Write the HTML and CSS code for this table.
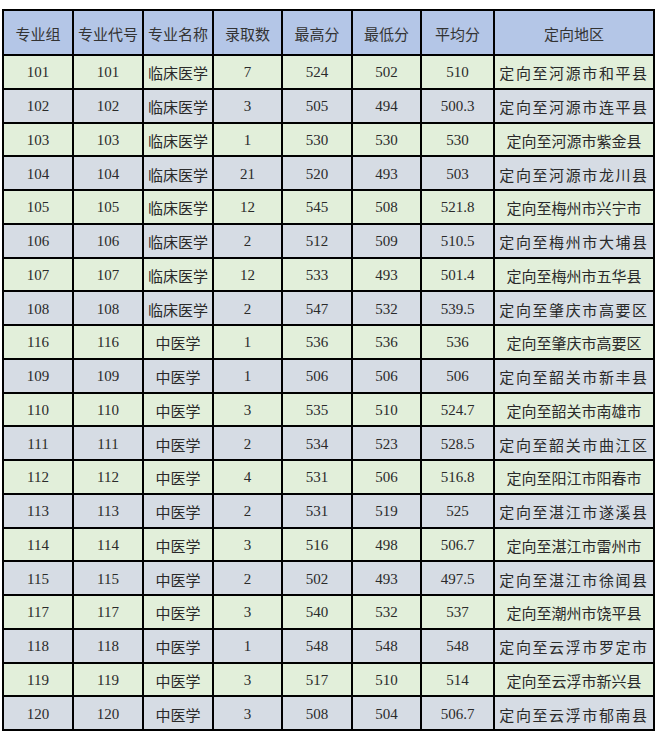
FILE: index.html
```html
<!DOCTYPE html>
<html lang="zh">
<head>
<meta charset="utf-8">
<link rel="stylesheet" href="styles.css">
</head>
<body>
<table class="grid">
<colgroup>
<col class="c1"><col class="c2"><col class="c3"><col class="c4"><col class="c5"><col class="c6"><col class="c7"><col class="c8">
</colgroup>
<thead>
<tr class="head"><th>专业组</th><th>专业代号</th><th>专业名称</th><th>录取数</th><th>最高分</th><th>最低分</th><th>平均分</th><th>定向地区</th></tr>
</thead>
<tbody>
<tr class="g"><td>101</td><td>101</td><td>临床医学</td><td>7</td><td>524</td><td>502</td><td>510</td><td class="wide">定向至河源市和平县</td></tr>
<tr class="b"><td>102</td><td>102</td><td>临床医学</td><td>3</td><td>505</td><td>494</td><td>500.3</td><td class="wide">定向至河源市连平县</td></tr>
<tr class="g"><td>103</td><td>103</td><td>临床医学</td><td>1</td><td>530</td><td>530</td><td>530</td><td>定向至河源市紫金县</td></tr>
<tr class="b"><td>104</td><td>104</td><td>临床医学</td><td>21</td><td>520</td><td>493</td><td>503</td><td class="wide">定向至河源市龙川县</td></tr>
<tr class="g"><td>105</td><td>105</td><td>临床医学</td><td>12</td><td>545</td><td>508</td><td>521.8</td><td>定向至梅州市兴宁市</td></tr>
<tr class="b"><td>106</td><td>106</td><td>临床医学</td><td>2</td><td>512</td><td>509</td><td>510.5</td><td class="wide">定向至梅州市大埔县</td></tr>
<tr class="g"><td>107</td><td>107</td><td>临床医学</td><td>12</td><td>533</td><td>493</td><td>501.4</td><td>定向至梅州市五华县</td></tr>
<tr class="b"><td>108</td><td>108</td><td>临床医学</td><td>2</td><td>547</td><td>532</td><td>539.5</td><td class="wide">定向至肇庆市高要区</td></tr>
<tr class="g"><td>116</td><td>116</td><td>中医学</td><td>1</td><td>536</td><td>536</td><td>536</td><td>定向至肇庆市高要区</td></tr>
<tr class="b"><td>109</td><td>109</td><td>中医学</td><td>1</td><td>506</td><td>506</td><td>506</td><td class="wide">定向至韶关市新丰县</td></tr>
<tr class="g"><td>110</td><td>110</td><td>中医学</td><td>3</td><td>535</td><td>510</td><td>524.7</td><td>定向至韶关市南雄市</td></tr>
<tr class="b"><td>111</td><td>111</td><td>中医学</td><td>2</td><td>534</td><td>523</td><td>528.5</td><td class="wide">定向至韶关市曲江区</td></tr>
<tr class="g"><td>112</td><td>112</td><td>中医学</td><td>4</td><td>531</td><td>506</td><td>516.8</td><td>定向至阳江市阳春市</td></tr>
<tr class="b"><td>113</td><td>113</td><td>中医学</td><td>2</td><td>531</td><td>519</td><td>525</td><td class="wide">定向至湛江市遂溪县</td></tr>
<tr class="g"><td>114</td><td>114</td><td>中医学</td><td>3</td><td>516</td><td>498</td><td>506.7</td><td>定向至湛江市雷州市</td></tr>
<tr class="b"><td>115</td><td>115</td><td>中医学</td><td>2</td><td>502</td><td>493</td><td>497.5</td><td class="wide">定向至湛江市徐闻县</td></tr>
<tr class="g"><td>117</td><td>117</td><td>中医学</td><td>3</td><td>540</td><td>532</td><td>537</td><td>定向至潮州市饶平县</td></tr>
<tr class="b"><td>118</td><td>118</td><td>中医学</td><td>1</td><td>548</td><td>548</td><td>548</td><td class="wide">定向至云浮市罗定市</td></tr>
<tr class="g"><td>119</td><td>119</td><td>中医学</td><td>3</td><td>517</td><td>510</td><td>514</td><td>定向至云浮市新兴县</td></tr>
<tr class="b"><td>120</td><td>120</td><td>中医学</td><td>3</td><td>508</td><td>504</td><td>506.7</td><td class="wide">定向至云浮市郁南县</td></tr>
</tbody>
</table>
</body>
</html>
```
FILE: styles.css
```css
html, body {
  background: #ffffff;
}
body {
  margin: 0;
  padding: 9px 0 0 2px;
  font-family: "Liberation Serif", "Noto Sans CJK SC", serif;
  color: #2a2a2a;
}
.grid {
  border-collapse: collapse;
  table-layout: fixed;
  width: 651px;
}
.c1 { width: 70px; }
.c2 { width: 70px; }
.c3 { width: 70px; }
.c4 { width: 69px; }
.c5 { width: 70px; }
.c6 { width: 69px; }
.c7 { width: 73px; }
.c8 { width: 160px; }
.grid th, .grid td {
  border: 2px solid #000;
  text-align: center;
  padding: 2px 0 0 0;
  white-space: nowrap;
  overflow: hidden;
}
.grid th {
  font-weight: normal;
  font-size: 15px;
  background: #b4c6e7;
  color: #333;
}
.head {
  height: 45px;
}
.grid td {
  font-size: 15px;
}
.grid tbody tr {
  height: 33.75px;
}
.g td { background: #e2efda; }
.b td { background: #d6dce4; }
.grid td.wide {
  letter-spacing: 1.6px;
}
```
